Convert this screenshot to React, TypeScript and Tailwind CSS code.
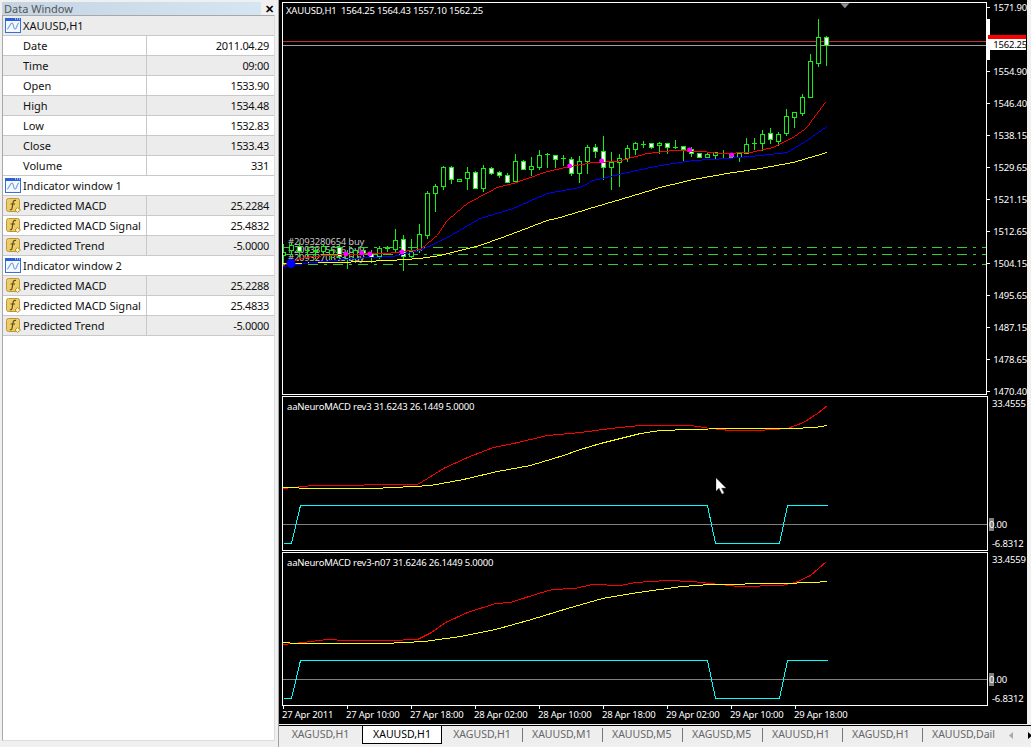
import React from "react";

const candles: [number, number, number, number, number?][] = [
  [244, 262, 252, 255],
  [243, 254, 245, 250],
  [243, 256, 246, 251, 1],
  [247, 256, 250, 250],
  [247, 258, 250, 251],
  [244, 254, 246, 251],
  [247, 259, 250, 254],
  [245, 258, 247, 256, 1],
  [250, 268, 253, 258],
  [249, 262, 250, 258],
  [248, 256, 250, 253, 1],
  [250, 262, 253, 257, 1],
  [246, 258, 248, 256],
  [246, 251, 248, 248],
  [229, 252, 240, 249],
  [235, 270, 239, 256, 1],
  [239, 257, 251, 256],
  [224, 252, 234, 250],
  [191, 238, 193, 235],
  [184, 211, 186, 193],
  [166, 189, 167, 186],
  [166, 183, 167, 179, 1],
  [179, 181, 179, 181],
  [167, 189, 172, 178],
  [171, 188, 172, 188, 1],
  [165, 191, 168, 188],
  [167, 174, 168, 173, 1],
  [171, 177, 172, 175, 1],
  [173, 182, 175, 182, 1],
  [154, 182, 161, 181],
  [160, 169, 161, 169, 1],
  [157, 175, 166, 169],
  [150, 169, 155, 167],
  [153, 167, 154, 154],
  [155, 167, 155, 159, 1],
  [155, 165, 158, 158],
  [157, 175, 159, 173, 1],
  [156, 182, 161, 173],
  [145, 173, 147, 161],
  [144, 157, 147, 151, 1],
  [136, 179, 151, 167, 1],
  [152, 189, 162, 167],
  [154, 186, 158, 162],
  [145, 161, 148, 158],
  [142, 154, 143, 149],
  [141, 147, 144, 144],
  [143, 148, 143, 147, 1],
  [142, 153, 143, 145],
  [143, 153, 143, 147, 1],
  [140, 148, 147, 147],
  [146, 160, 146, 149, 1],
  [147, 156, 149, 153, 1],
  [153, 157, 153, 157, 1],
  [152, 157, 154, 157],
  [152, 159, 152, 155],
  [150, 157, 153, 153],
  [153, 157, 153, 157, 1],
  [153, 161, 153, 157],
  [138, 153, 144, 153],
  [138, 149, 143, 143],
  [130, 150, 134, 143],
  [128, 143, 133, 139, 1],
  [132, 145, 134, 141],
  [109, 135, 116, 133],
  [112, 127, 112, 117],
  [94, 115, 97, 113],
  [54, 97, 61, 97],
  [19, 66, 37, 63],
  [36, 65, 37, 45, 1],
];

const mainRed = "283,265 300,258 313,256 347,254 387,253 420,249 437,235 447,220 467,203 497,187 513,183 547,171 570,166 593,162 617,161 647,153 673,150 703,151 720,153 750,152 773,147 793,137 807,127 812,120 826,101";
const mainBlue = "283,266 313,262 353,258 393,256 420,250 447,237 480,218 513,208 547,193 580,187 593,180 627,172 660,165 693,160 727,158 760,155 787,152 807,140 827,126";
const mainYellow = "283,263 340,262 390,260 420,258 440,255 480,245 513,233 547,220 560,217 593,207 627,197 660,187 693,179 727,173 760,168 793,162 827,152";
const dots = [[346, 254], [362, 253], [370, 254], [402, 252], [570, 166], [602, 161], [690, 150], [732, 155]];

const red1 = "283,488 313,485 347,485 380,484 417,484 427,478 443,468 467,457 493,447 513,443 547,435 580,432 610,428 640,425 690,425 710,428 730,430 757,430 787,428 803,422 817,413 827,405";
const yellow1 = "283,487 313,488 373,488 413,486 430,485 463,479 497,471 530,465 563,455 580,449 600,443 620,438 640,433 660,430 690,429 727,428 753,428 790,428 815,427 827,425";
const red2 = "283,644 302,642 327,639 345,640 388,640 417,639 431,632 445,622 467,612 495,603 510,602 538,593 552,589 574,588 592,584 620,585 635,582 667,580 692,581 710,583 738,586 781,585 795,582 810,575 826,561";
const yellow2 = "283,642 295,643 383,643 424,641 460,636 495,629 531,619 567,608 602,598 638,592 681,586 710,584 781,583 813,582 827,581";

const rows = [
  { kind: "chart", label: "XAUUSD,H1", bg: "bg-[#ececec]" },
  { kind: "plain", label: "Date", value: "2011.04.29", bg: "bg-white" },
  { kind: "plain", label: "Time", value: "09:00", bg: "bg-[#ececec]" },
  { kind: "plain", label: "Open", value: "1533.90", bg: "bg-white" },
  { kind: "plain", label: "High", value: "1534.48", bg: "bg-[#ececec]" },
  { kind: "plain", label: "Low", value: "1532.83", bg: "bg-white" },
  { kind: "plain", label: "Close", value: "1533.43", bg: "bg-[#ececec]" },
  { kind: "plain", label: "Volume", value: "331", bg: "bg-white" },
  { kind: "chart", label: "Indicator window 1", bg: "bg-white" },
  { kind: "func", label: "Predicted MACD", value: "25.2284", bg: "bg-[#ececec]" },
  { kind: "func", label: "Predicted MACD Signal", value: "25.4832", bg: "bg-white" },
  { kind: "func", label: "Predicted Trend", value: "-5.0000", bg: "bg-[#ececec]" },
  { kind: "chart", label: "Indicator window 2", bg: "bg-white" },
  { kind: "func", label: "Predicted MACD", value: "25.2288", bg: "bg-[#ececec]" },
  { kind: "func", label: "Predicted MACD Signal", value: "25.4833", bg: "bg-white" },
  { kind: "func", label: "Predicted Trend", value: "-5.0000", bg: "bg-[#ececec]" },
];

const prices = ["1571.90", "", "1554.90", "1546.40", "1538.15", "1529.65", "1521.15", "1512.65", "1504.15", "1495.65", "1487.15", "1478.65", "1470.40"];
const times = ["27 Apr 2011", "27 Apr 10:00", "27 Apr 18:00", "28 Apr 02:00", "28 Apr 10:00", "28 Apr 18:00", "29 Apr 02:00", "29 Apr 10:00", "29 Apr 18:00"];
const tabs = ["XAGUSD,H1", "XAUUSD,H1", "XAGUSD,H1", "XAUUSD,M1", "XAUUSD,M5", "XAGUSD,M5", "XAUUSD,H1", "XAGUSD,H1", "XAUUSD,Dail"];

function ChartIcon() {
  return (
    <svg width="16" height="15" viewBox="0 0 16 15" className="shrink-0">
      <rect x="0.5" y="0.5" width="15" height="14" fill="#f4f8ff" stroke="#3a6fd8" />
      <rect x="0" y="0" width="16" height="3" fill="#2a62d4" />
      <path d="M10 1h1M12 1h1M14 1h1" stroke="#fff" />
      <path d="M2 11 C4 11 5 5 7 5 C9 5 8 11 10 11 C12 11 12 5 14 5" fill="none" stroke="#7f9fe0" strokeWidth="1.2" />
    </svg>
  );
}

function FuncIcon() {
  return (
    <svg width="15" height="15" viewBox="0 0 15 15" className="shrink-0">
      <rect x="0.5" y="0.5" width="13" height="13" rx="2" fill="#ebcd6c" stroke="#bd9632" />
      <path d="M10 2.5 C7.8 1.8 7.2 3.2 6.8 6 L6 10.5 C5.8 11.8 5 12 3.8 11.5 M4.6 6 H9" fill="none" stroke="#5e4a10" strokeWidth="1.2" />
      <path d="M11.5 9.5 L14.5 12 L11.5 14.5 L9 12 Z" fill="#fbeeb8" stroke="#bd9632" />
    </svg>
  );
}

function Polyline({ points, color }: { points: string; color: string }) {
  return <polyline points={points} fill="none" stroke={color} strokeWidth="1" shapeRendering="crispEdges" transform="translate(0.5 0.5)" />;
}

function SubPlot({ top, height, title, red, yellow, high, low, zero }: { top: number; height: number; title: string; red: string; yellow: string; high: number; low: number; zero: number }) {
  return (
    <div className="relative h-full w-[706px] border border-white">
      <span className="absolute left-[4px] top-[4px] text-[9.5px] leading-[12px] tracking-[-0.2px] text-white">{title}</span>
      <svg className="block h-full w-full" viewBox={`283 ${top} 704 ${height}`}>
        <line x1="283" x2="987" y1={zero + 0.5} y2={zero + 0.5} stroke="#808080" shapeRendering="crispEdges" />
        <Polyline points={`283,${low} 291,${low} 300,${high} 707,${high} 715,${low} 779,${low} 787,${high} 827,${high}`} color="#00ffff" />
        <Polyline points={red} color="#ff0000" />
        <Polyline points={yellow} color="#ffff00" />
      </svg>
    </div>
  );
}

function SubAxis({ high, zeroTop, lowTop, highTop }: { high: string; zeroTop: string; lowTop: string; highTop: string }) {
  return (
    <div className="relative h-full flex-1 text-[9.5px] leading-[12px] tracking-[-0.2px] text-white">
      <span className={`absolute left-[4px] ${highTop}`}>{high}</span>
      <span className={`absolute left-[1px] ${zeroTop}`}>
        <span className="bg-[#808080]">0</span>.00
      </span>
      <span className={`absolute left-[4px] ${lowTop}`}>-6.8312</span>
    </div>
  );
}

export default function App() {
  return (
    <div className="flex h-[747px] w-[1031px] overflow-hidden bg-[#f0f0f0] font-['Noto_Sans',sans-serif] text-[11px]">
      <aside className="flex h-full w-[279px] shrink-0 flex-col border-r border-[#a0a0a0]">
        <div className="flex h-[15px] shrink-0 items-center pl-[2px] pt-[1px]">
          <div className="flex h-[13px] w-[259px] items-center bg-gradient-to-r from-[#c4d4e2] to-[#d6e5f2] pl-[2px] text-[11px] leading-[13px] text-[#555]">Data Window</div>
          <span className="ml-[4px] text-[11px] font-bold leading-[13px] text-black">✕</span>
        </div>
        <div className="ml-[2px] mb-[6px] flex w-[273px] flex-1 flex-col border border-b-[#dcdcdc] border-l-[#a8a8a8] border-r-[#dcdcdc] border-t-[#a8a8a8] bg-white">
          {rows.map((r, i) => (
            <div key={i} className={`flex h-[20px] shrink-0 items-center border-b border-[#c8c8c8] ${r.bg} text-[#111]`}>
              {r.kind === "chart" ? (
                <div className="flex items-center gap-[2px] pl-[2px]">
                  <ChartIcon />
                  <span className="pt-[1px]">{r.label}</span>
                </div>
              ) : (
                <>
                  <div className="flex h-full w-[144px] items-center border-r border-[#c8c8c8] pl-[3px]">
                    {r.kind === "func" ? <FuncIcon /> : <span className="w-[15px] shrink-0" />}
                    <span className="ml-[2px] pt-[1px]">{r.label}</span>
                  </div>
                  <div className="flex-1 pr-[5px] pt-[1px] text-right tracking-[-0.3px]">{r.value}</div>
                </>
              )}
            </div>
          ))}
        </div>
      </aside>

      <main className="flex h-full flex-1 flex-col">
        <div className="relative flex h-[724px] w-[748px] shrink-0 flex-col bg-black pl-[3px] pt-[2px]">
          <div className="flex h-[393px] shrink-0">
            <div className="relative h-full w-[706px] border border-white">
              <span className="absolute left-[3px] top-[2px] whitespace-pre text-[9.5px] leading-[12px] tracking-[-0.2px] text-white">XAUUSD,H1  1564.25 1564.43 1557.10 1562.25</span>
              <svg className="block h-full w-full" viewBox="283 3 704 391">
                <g fontSize="9.5" letterSpacing="-0.2" fill="#c8c8c8" fontFamily="Noto Sans, sans-serif">
                  <text x="288" y="245">#2093280654 buy</text>
                  <text x="288" y="253">#2093315636 buy</text>
                  <text x="288" y="261">#2093270353 buy</text>
                </g>
                <g stroke="#32cd32" strokeDasharray="10 6 3 6" shapeRendering="crispEdges">
                  <line x1="283" x2="987" y1="247.5" y2="247.5" />
                  <line x1="283" x2="987" y1="254.5" y2="254.5" />
                  <line x1="283" x2="987" y1="264.5" y2="264.5" />
                </g>
                <line x1="283" x2="987" y1="41.5" y2="41.5" stroke="#c03030" shapeRendering="crispEdges" />
                <line x1="283" x2="987" y1="45.5" y2="45.5" stroke="#a0a0a0" shapeRendering="crispEdges" />
                <g shapeRendering="crispEdges">
                  {candles.map(([wt, wb, bt, bb, white], i) => {
                    const x = 283 + i * 8;
                    return (
                      <g key={i}>
                        <line x1={x + 0.5} x2={x + 0.5} y1={wt} y2={wb + 1} stroke="#14f014" />
                        {bt === bb ? (
                          <line x1={x - 2} x2={x + 3} y1={bt + 0.5} y2={bt + 0.5} stroke="#14f014" />
                        ) : (
                          <rect x={x - 1.5} y={bt + 0.5} width="4" height={bb - bt} fill={white ? "#ffffff" : "#000000"} stroke="#14f014" />
                        )}
                      </g>
                    );
                  })}
                </g>
                <Polyline points={mainYellow} color="#ffff00" />
                <Polyline points={mainBlue} color="#0000ff" />
                <Polyline points={mainRed} color="#ff0000" />
                {dots.map(([x, y], i) => (
                  <circle key={i} cx={x} cy={y} r="2.5" fill="#ff00ff" />
                ))}
                <circle cx="291" cy="263.5" r="4.5" fill="#0000ff" />
                <path d="M841 3 H850 L845.5 8 Z" fill="#8a8f96" />
              </svg>
            </div>
            <div className="relative flex-1 text-[9.5px] leading-[10px] tracking-[-0.2px] text-white">
              <div className="flex flex-col gap-[22px]">
                {prices.map((p, i) => (
                  <div key={i} className="flex h-[10px] shrink-0 items-center">
                    <span className="h-px w-[3px] bg-white" />
                    <span className="ml-[3px] translate-y-[1px]">{p}</span>
                  </div>
                ))}
              </div>
              <span className="absolute left-0 top-[17px] h-[41px] w-[3px] bg-white" />
              <div className="absolute left-[1px] top-[33px] h-[4px] w-[38px] bg-[#ff0000]" />
              <div className="absolute left-[1px] top-[37px] h-[11px] w-[38px] bg-white pl-[5px] leading-[12px] text-black">1562.25</div>
            </div>
          </div>

          <div className="mt-[1px] flex h-[155px] shrink-0">
            <SubPlot top={397} height={153} title="aaNeuroMACD rev3 31.6243 26.1449 5.0000" red={red1} yellow={yellow1} high={505} low={543} zero={524} />
            <SubAxis high="33.4555" highTop="top-[2px]" zeroTop="top-[123px]" lowTop="top-[142px]" />
          </div>

          <div className="mt-[1px] flex h-[154px] shrink-0">
            <SubPlot top={553} height={152} title="aaNeuroMACD rev3-n07 31.6246 26.1449 5.0000" red={red2} yellow={yellow2} high={660} low={698} zero={679} />
            <SubAxis high="33.4559" highTop="top-[2px]" zeroTop="top-[122px]" lowTop="top-[141px]" />
          </div>

          <div className="flex h-[17px] shrink-0 text-[9.5px] leading-[10px] tracking-[-0.2px] text-white">
            {times.map((t) => (
              <div key={t} className="w-[64px] shrink-0 whitespace-nowrap">
                <div className="ml-px h-[3px] w-px bg-white" />
                <div className="pt-[1px]">{t}</div>
              </div>
            ))}
          </div>

          <svg className="absolute left-[437px] top-[478px]" width="12" height="18" viewBox="0 0 12 18">
            <path d="M0 0 L0 13 L3 10 L6 16 L8 15 L5.5 10 L10 10 Z" fill="#fff" stroke="#777" strokeWidth="0.5" />
          </svg>
        </div>

        <div className="mt-[1px] flex h-[19px] w-full shrink-0 items-stretch border-t border-black bg-[#eeeeee] text-[10.5px] leading-[17px] text-[#666]">
          {tabs.map((t, i) => (
            <div
              key={i}
              className={
                i === 1
                  ? "w-[80px] shrink-0 border-x border-b border-black bg-white text-center text-black"
                  : i === 0
                  ? "w-[83px] shrink-0 text-center"
                  : i === 2
                  ? "w-[80px] shrink-0 text-center"
                  : "my-[2px] w-[80px] shrink-0 whitespace-nowrap border-l border-[#777] pl-[9px] leading-[13px]"
              }
            >
              {t}
            </div>
          ))}
          <svg className="ml-[7px] mt-[6px]" width="24" height="7" viewBox="0 0 24 7">
            <path d="M4 0 V7 L0 3.5 Z" fill="#aaa" />
            <path d="M19 0 V7 L23 3.5 Z" fill="#000" />
          </svg>
        </div>
      </main>
    </div>
  );
}
